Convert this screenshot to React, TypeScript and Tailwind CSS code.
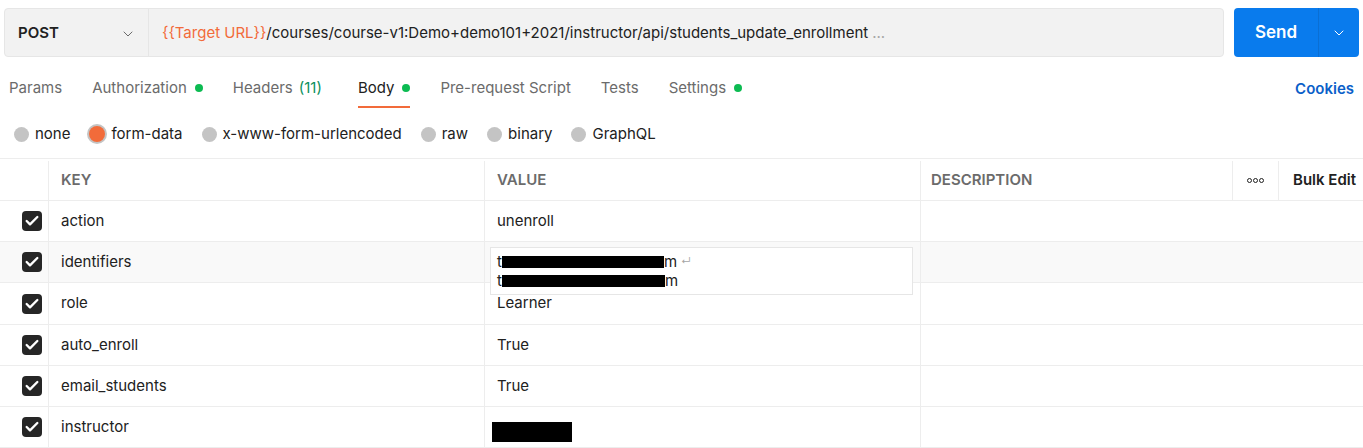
import { ChevronDown, Check } from 'lucide-react';

const tabs = [
  { label: 'Params' },
  { label: 'Authorization', dot: true },
  { label: 'Headers', count: '(11)' },
  { label: 'Body', dot: true, active: true },
  { label: 'Pre-request Script' },
  { label: 'Tests' },
  { label: 'Settings', dot: true },
];

const bodyTypes = ['none', 'form-data', 'x-www-form-urlencoded', 'raw', 'binary', 'GraphQL'];

const rows = [
  { key: 'action', value: 'unenroll', h: 'h-[41px]' },
  { key: 'identifiers', value: 'multi', h: 'h-[41px]' },
  { key: 'role', value: 'Learner', h: 'h-[42px]' },
  { key: 'auto_enroll', value: 'True', h: 'h-[41px]' },
  { key: 'email_students', value: 'True', h: 'h-[41px]' },
  { key: 'instructor', value: 'redacted', h: 'h-[41px]' },
];

function Checkbox() {
  return (
    <div className="w-5 h-5 rounded-[4px] bg-[#262626] flex items-center justify-center">
      <Check className="w-4 h-4 text-white" strokeWidth={3.5} />
    </div>
  );
}

function Dot() {
  return <span className="inline-block w-2 h-2 rounded-full bg-[#0cbb52] ml-[8px]" />;
}

export default function App() {
  return (
    <div className="w-[1363px] h-[448px] bg-white overflow-hidden text-[15px] text-[#212121]" style={{ fontFamily: 'Inter, "Noto Sans", sans-serif' }}>
      {/* Request bar */}
      <div className="flex pt-2 pl-1 pr-1 h-[57px]">
        <div className="flex flex-1 h-[49px] bg-[#f2f2f2] border border-[#e6e6e6] rounded-[4px]">
          <div className="w-[144px] flex items-center justify-between pt-[2px] pl-[13px] pr-[12px] border-r border-[#e6e6e6]">
            <span className="font-semibold text-[15px] text-[#212121]">POST</span>
            <ChevronDown className="w-4 h-4 text-[#6b6b6b]" strokeWidth={1.5} />
          </div>
          <div className="flex-1 flex items-center pt-[2px] pl-[13px] text-[15px]">
            <span className="text-[#f26b3a]">{'{{Target URL}}'}</span>
            <span className="text-[#212121]">/courses/course-v1:Demo+demo101+2021/instructor/api/students_update_enrollment</span>
            <span className="text-[#a6a6a6] ml-1">...</span>
          </div>
        </div>
        <div className="ml-[10px] flex h-[49px] w-[125px] rounded-[4px] bg-[#097bed] text-white">
          <div className="w-[85px] flex items-center justify-center pt-[1px] font-semibold text-[17px] border-r border-[#0a6fd4]">Send</div>
          <div className="flex-1 flex items-center justify-center">
            <ChevronDown className="w-4 h-4" strokeWidth={1.5} />
          </div>
        </div>
      </div>

      {/* Tabs */}
      <div className="flex items-end justify-between h-[51px] pl-[9px] pr-[9px]">
        <div className="flex gap-[30px]">
          {tabs.map((t) => (
            <div
              key={t.label}
              className={`h-[40px] pt-[2px] flex items-center border-b-2 ${t.active ? 'border-[#f26b3a] text-[#212121]' : 'border-transparent text-[#6b6b6b]'} ${t.count ? 'mr-[6px]' : ''}`}
            >
              <span>{t.label}</span>
              {t.count && <span className="ml-[6px] text-[#0c8f5c]">{t.count}</span>}
              {t.dot && <Dot />}
            </div>
          ))}
        </div>
        <div className="h-[40px] pt-[2px] flex items-center text-[#0b5fc9] font-semibold">Cookies</div>
      </div>

      {/* Body types */}
      <div className="flex items-center h-[50px] pt-[2px] pl-[14px] gap-[19px]">
        {bodyTypes.map((b) => (
          <div key={b} className="flex items-center gap-[6px] text-[#212121]">
            {b === 'form-data' ? (
              <span className="w-4 h-4 rounded-full bg-[#f26b3a] ring-2 ring-[#c4c4c4]" />
            ) : (
              <span className="w-[15px] h-[15px] rounded-full bg-[#c4c4c4]" />
            )}
            <span>{b}</span>
          </div>
        ))}
      </div>

      {/* Table */}
      <div className="border-t border-[#ededed]">
        <div className="flex h-[42px] pt-[2px] border-b border-[#ededed] font-semibold text-[#6b6b6b]">
          <div className="w-[49px] border-r border-[#ededed]" />
          <div className="w-[436px] border-r border-[#ededed] flex items-center pl-3">KEY</div>
          <div className="w-[436px] border-r border-[#ededed] flex items-center pl-3">VALUE</div>
          <div className="w-[312px] border-r border-[#ededed] flex items-center pl-[10px]">DESCRIPTION</div>
          <div className="w-[46px] border-r border-[#ededed] flex items-center justify-center">
            <span className="flex gap-[1px]">
              <span className="w-[5px] h-[5px] rounded-full border border-[#212121]" />
              <span className="w-[5px] h-[5px] rounded-full border border-[#212121]" />
              <span className="w-[5px] h-[5px] rounded-full border border-[#212121]" />
            </span>
          </div>
          <div className="flex-1 flex items-center pl-[14px] text-[#212121]">Bulk Edit</div>
        </div>

        {rows.map((r) => (
          <div key={r.key} className={`flex ${r.h} border-b border-[#ededed] ${r.value === 'multi' ? 'bg-[#f9f9f9]' : ''}`}>
            <div className="w-[49px] border-r border-[#ededed] flex items-center justify-end pr-[6px]">
              <Checkbox />
            </div>
            <div className="w-[436px] border-r border-[#ededed] flex items-center pl-3">{r.key}</div>
            <div className="w-[436px] border-r border-[#ededed] flex items-center pl-3 relative">
              {r.value === 'multi' ? (
                <div className="absolute left-[5px] top-[5px] w-[423px] h-[48px] bg-white border border-[#e6e6e6] pl-[6px] pt-[4px] leading-[19px] z-10">
                  <div className="flex items-center">
                    <span>t</span>
                    <span className="inline-block w-[162px] h-[12px] bg-black" />
                    <span>m</span>
                    <span className="ml-1 text-[10px] text-[#a6a6a6]">↵</span>
                  </div>
                  <div className="flex items-center">
                    <span>t</span>
                    <span className="inline-block w-[163px] h-[12px] bg-black" />
                    <span>m</span>
                  </div>
                </div>
              ) : r.value === 'redacted' ? (
                <span className="inline-block -ml-[5px] mt-[10px] w-[80px] h-[20px] bg-black" />
              ) : (
                r.value
              )}
            </div>
            <div className="flex-1" />
          </div>
        ))}
      </div>
    </div>
  );
}
